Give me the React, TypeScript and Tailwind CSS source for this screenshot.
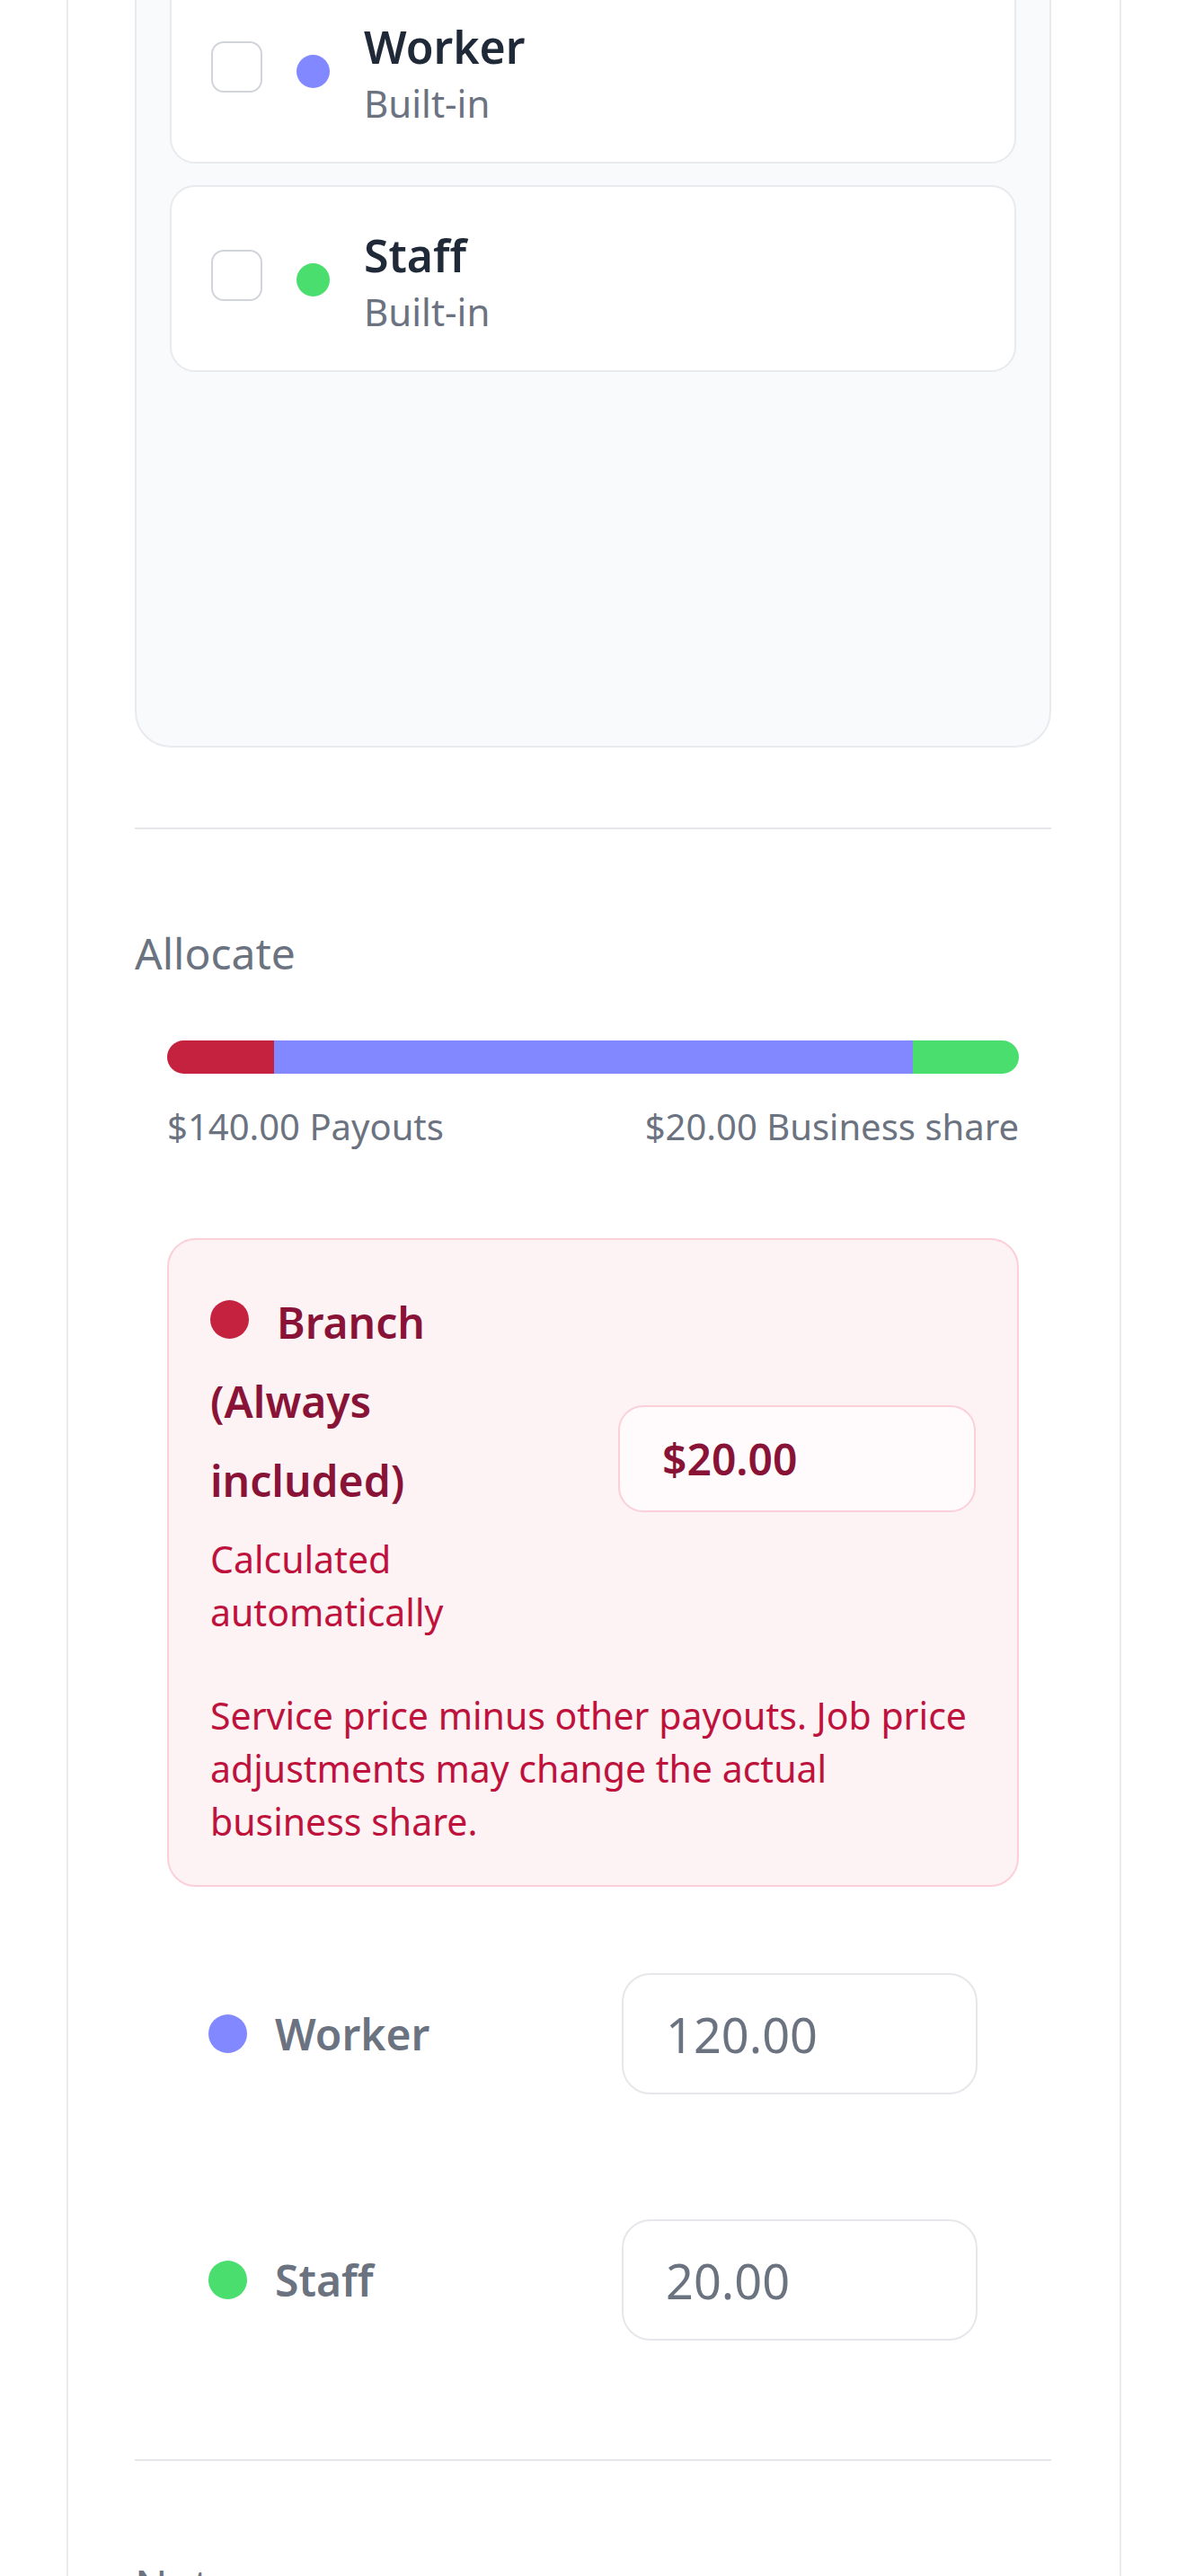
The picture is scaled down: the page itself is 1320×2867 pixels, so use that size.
import { useState } from "react"

type Role = {
    id: string
    name: string
    dot: string
    amount: string
}

const roles: Role[] = [
    { id: "worker", name: "Worker", dot: "bg-[#8288ff]", amount: "120.00" },
    { id: "staff", name: "Staff", dot: "bg-[#4ade6e]", amount: "20.00" },
]

const RoleCard = ({ role }: { role: Role }) => {
    const [checked, setChecked] = useState(false)

    return (
        <div className="flex h-[208px] items-start rounded-[28px] border-2 border-[#e8eaee] bg-white pl-[44px] pt-[46px]">
            <button
                type="button"
                onClick={() => setChecked(!checked)}
                className="mt-[24px] size-[57px] shrink-0 rounded-[14px] border-2 border-[#d1d5db] bg-white"
            />
            <span className={`ml-[38px] mt-[39px] size-[37px] shrink-0 rounded-full ${role.dot}`} />
            <div className="ml-[38px]">
                <p className="text-[50px] font-semibold leading-[60px] text-[#1f2937]">{role.name}</p>
                <p className="text-[42px] leading-[66px] text-[#6b7280]">Built-in</p>
            </div>
        </div>
    )
}

const PayoutRow = ({ role }: { role: Role }) => {
    const [value, setValue] = useState(role.amount)

    return (
        <div className="flex items-center justify-between p-[46px]">
            <div className="flex items-center gap-[31px]">
                <span className={`size-[43px] rounded-full ${role.dot}`} />
                <span className="text-[48px] font-semibold text-[#6b7280]">{role.name}</span>
            </div>
            <input
                value={value}
                onChange={(e) => setValue(e.target.value)}
                className="h-[135px] w-[396px] rounded-[32px] border-2 border-[#e5e7eb] bg-white pl-[47px] text-[54px] text-[#6b7280] outline-none"
            />
        </div>
    )
}

export default function App() {
    return (
        <div className="h-[2867px] overflow-hidden bg-white font-['Noto_Sans',sans-serif]">
            <div className="ml-[74px] min-h-full w-[1174px] border-x-2 border-[#e9ebef] pl-[74px] pr-[76px]">
                {/* role list */}
                <div className="-mt-[70px] h-[902px] rounded-[40px] border-2 border-[#e8eaee] bg-[#f9fafb] px-[37px] pt-[42px]">
                    <div className="flex flex-col gap-[24px]">
                        {roles.map((role) => (
                            <RoleCard key={role.id} role={role} />
                        ))}
                    </div>
                </div>

                <div className="mt-[89px] h-[2px] bg-[#e5e7eb]" />

                {/* allocation */}
                <p className="mt-[102px] text-[48px] leading-[72px] text-[#6b7280]">Allocate</p>
                <div className="px-[36px]">
                    <div className="mt-[61px] flex h-[37px] overflow-hidden rounded-full">
                        <div className="w-[12.5%] bg-[#c4223f]" />
                        <div className="w-[75%] bg-[#8288ff]" />
                        <div className="w-[12.5%] bg-[#4ade6e]" />
                    </div>
                    <div className="mt-[31px] flex justify-between text-[40px] leading-[56px] text-[#6b7280]">
                        <span>$140.00 Payouts</span>
                        <span>$20.00 Business share</span>
                    </div>

                    <div className="mt-[96px] rounded-[32px] border-2 border-[#fbd0d8] bg-[#fdf2f4] px-[46px] pb-[41px] pt-[48px]">
                        <div className="flex items-center justify-between">
                            <div className="w-[370px]">
                                <p className="text-[48px] font-semibold leading-[88px] text-[#881337]">
                                    <span className="mr-[31px] inline-block size-[43px] rounded-full bg-[#c4223f]" />
                                    Branch (Always included)
                                </p>
                                <p className="mt-[14px] text-[41px] leading-[59px] text-[#be123c]">Calculated automatically</p>
                            </div>
                            <input
                                readOnly
                                value="$20.00"
                                className="-mt-[6px] h-[119px] w-[398px] rounded-[28px] border-2 border-[#fbd0d8] bg-[#fffbfc] pl-[47px] text-[48px] font-semibold text-[#881337] outline-none"
                            />
                        </div>
                        <p className="mt-[56px] text-[41px] leading-[59px] text-[#be123c]">
                            Service price minus other payouts. Job price adjustments may change the actual business share.
                        </p>
                    </div>

                    <div className="mt-[50px] flex flex-col gap-[47px]">
                        {roles.map((role) => (
                            <PayoutRow key={role.id} role={role} />
                        ))}
                    </div>
                </div>

                <div className="mt-[86px] h-[2px] bg-[#e5e7eb]" />

                <p className="mt-[102px] text-[48px] leading-[72px] text-[#6b7280]">Notes</p>
            </div>
        </div>
    )
}
